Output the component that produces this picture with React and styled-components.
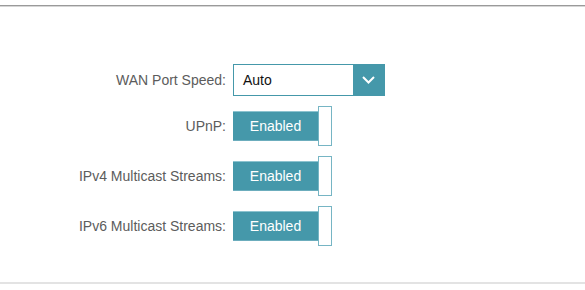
import React from 'react'
import styled, { createGlobalStyle } from 'styled-components'

const Global = createGlobalStyle`
body{
  margin:0;
  background:#fff;
  font-family:"Liberation Sans", Arial, sans-serif;
}
`

const Page = styled.div`
width:585px;
height:290px;
display:flex;
flex-direction:column;
`

const TopRule = styled.div`
margin-top:5px;
height:1px;
border-top:1px solid #9a9a9a;
background:#d6d6d6;
`

const Form = styled.div`
flex:1;
display:grid;
grid-template-columns:226px auto;
column-gap:7px;
row-gap:10px;
align-content:start;
align-items:center;
padding-top:57px;
`

const Label = styled.div`
text-align:right;
font-size:14px;
color:#5c5c5c;
`

const Select = styled.div`
width:152px;
height:32px;
box-sizing:border-box;
border:1px solid #4598aa;
display:flex;
`

const SelectValue = styled.div`
flex:1;
display:flex;
align-items:center;
padding-left:9px;
font-size:14px;
color:#111;
`

const Arrow = styled.div`
width:31px;
background:#4598aa;
display:flex;
align-items:center;
justify-content:center;
`

const Toggle = styled.div`
display:flex;
align-items:center;
height:40px;
`

const ToggleLabel = styled.div`
width:85px;
height:30px;
box-sizing:border-box;
background:#4598aa;
border-top:1px solid #8cc3cf;
border-bottom:1px solid #6cadbd;
color:#fff;
font-size:14px;
display:flex;
align-items:center;
justify-content:center;
`

const Knob = styled.div`
width:14px;
height:40px;
box-sizing:border-box;
border:1px solid #76b5c4;
background:#fff;
`

const BottomRule = styled.div`
height:2px;
background:#e3e3e3;
margin-bottom:6px;
`

const Switch = ({ on }) => (
  <Toggle>
    <ToggleLabel>{on ? 'Enabled' : 'Disabled'}</ToggleLabel>
    <Knob />
  </Toggle>
)

const rows = ['UPnP:', 'IPv4 Multicast Streams:', 'IPv6 Multicast Streams:']

export default function App() {
  return (
    <Page>
      <Global />
      <TopRule />
      <Form>
        <Label>WAN Port Speed:</Label>
        <Select>
          <SelectValue>Auto</SelectValue>
          <Arrow>
            <svg width="13" height="8" viewBox="0 0 13 8">
              <path d="M1 1l5.5 5.5L12 1" fill="none" stroke="#fff" strokeWidth="2" />
            </svg>
          </Arrow>
        </Select>
        {rows.map(r => (
          <React.Fragment key={r}>
            <Label>{r}</Label>
            <Switch on />
          </React.Fragment>
        ))}
      </Form>
      <BottomRule />
    </Page>
  )
}
